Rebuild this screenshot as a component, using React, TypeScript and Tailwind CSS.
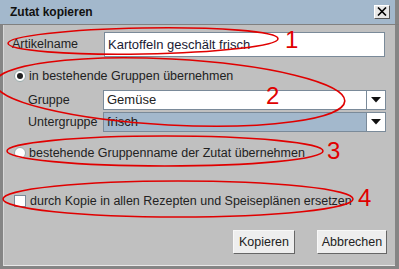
import React from "react";

const font = { fontFamily: '"Liberation Sans", Arial, sans-serif' };

function Arrow() {
  return (
    <svg width="10" height="6" viewBox="0 0 10 6">
      <polygon points="0,0 10,0 5,5.5" fill="#111" />
    </svg>
  );
}

function Combo({ value, selected }: { value: string; selected?: boolean }) {
  return (
    <div className="flex h-[20px] w-[283px] border border-[#7a8a99]">
      <div
        className={
          "flex-1 flex items-center pl-[3px] text-[13px] text-[#222] " +
          (selected ? "bg-[#a3b8cc]" : "bg-white")
        }
      >
        {value}
      </div>
      <div className="w-[19px] bg-white border-l border-[#7a8a99] flex items-center justify-center">
        <Arrow />
      </div>
    </div>
  );
}

function Radio({ checked }: { checked?: boolean }) {
  return (
    <div className="w-[12px] h-[12px] rounded-full bg-white border border-[#9aa] flex items-center justify-center">
      {checked && <div className="w-[6px] h-[6px] rounded-full bg-[#222]" />}
    </div>
  );
}

export default function App() {
  return (
    <div
      className="relative w-[399px] h-[269px] bg-[#858585] flex flex-col overflow-hidden"
      style={font}
    >
      {/* Title bar */}
      <div className="h-[24px] mr-[4px] bg-[#a3b8cc] flex items-center justify-between pl-[10px] pr-[5px]">
        <span className="text-[12px] font-bold text-[#111]">Zutat kopieren</span>
        <div className="w-[16px] h-[14px] bg-[#e8e8e8] border border-t-white border-l-white border-r-[#555] border-b-[#555] flex items-center justify-center mb-[1px]">
          <svg width="10" height="9" viewBox="0 0 10 9">
            <path d="M1 0.5 L9 8.5 M9 0.5 L1 8.5" stroke="#000" strokeWidth="1.6" />
          </svg>
        </div>
      </div>
      <div className="h-[1px] bg-[#808080]" />
      {/* Body */}
      <div className="flex-1 ml-[3px] mr-[4px] mb-[3px] bg-[#c0c0c0] border-l border-[#d8d8d8] border-b border-b-[#e8e8e8] text-[12.5px] text-[#222] flex flex-col">
        {/* Artikelname */}
        <div className="flex items-center mt-[7px] pl-[8px]">
          <div className="w-[92px]">Artikelname</div>
          <div className="w-[281px] h-[25px] bg-white border border-[#7a8a99] flex items-center pl-[3px] text-[13px] text-[#1a1a33]">
            Kartoffeln geschält frisch
          </div>
        </div>
        {/* Radio 1 */}
        <div className="flex items-center h-[16px] mt-[11px] pl-[10px] gap-[3px]">
          <Radio checked />
          <span>in bestehende Gruppen übernehmen</span>
        </div>
        {/* Gruppe */}
        <div className="flex items-center mt-[6px] pl-[24px]">
          <div className="w-[75px]">Gruppe</div>
          <Combo value="Gemüse" />
        </div>
        <div className="flex items-center mt-[2px] pl-[24px]">
          <div className="w-[75px]">Untergruppe</div>
          <Combo value="frisch" selected />
        </div>
        {/* Radio 2 */}
        <div className="flex items-center h-[16px] mt-[13px] pl-[10px] gap-[3px]">
          <Radio />
          <span>bestehende Gruppenname der Zutat übernehmen</span>
        </div>
        {/* Checkbox */}
        <div className="flex items-center h-[16px] mt-[32px] pl-[10px] gap-[4px]">
          <div className="w-[12px] h-[12px] bg-white border border-[#7a8a99]" />
          <span>durch Kopie in allen Rezepten und Speiseplänen ersetzen</span>
        </div>
        {/* Buttons */}
        <div className="flex justify-end gap-[22px] mt-[21px] pr-[8px]">
          <button className="w-[62px] h-[24px] bg-[#eeeeee] border border-t-[#f8f8f8] border-l-[#f8f8f8] border-r-[#666] border-b-[#666] text-[12.5px] text-[#222]">
            Kopieren
          </button>
          <button className="w-[70px] h-[24px] bg-[#eeeeee] border border-t-[#f8f8f8] border-l-[#f8f8f8] border-r-[#666] border-b-[#666] text-[12.5px] text-[#222]">
            Abbrechen
          </button>
        </div>
      </div>

      {/* Red annotations */}
      <svg
        className="absolute inset-0 pointer-events-none"
        width="399"
        height="269"
        viewBox="0 0 399 269"
      >
        <g fill="none" stroke="#e00000" strokeWidth="1.6">
          <ellipse cx="143" cy="41" rx="135" ry="13" transform="rotate(-1 143 41)" />
          <ellipse cx="170" cy="92" rx="175" ry="33" transform="rotate(3 170 92)" />
          <ellipse cx="165" cy="151" rx="158" ry="15" />
          <ellipse cx="178" cy="199" rx="175" ry="18" />
        </g>
        <g fill="#e00000" style={font} fontSize="24">
          <text x="285" y="48">1</text>
          <text x="266" y="104">2</text>
          <text x="327" y="159">3</text>
          <text x="358" y="206">4</text>
        </g>
      </svg>
    </div>
  );
}
